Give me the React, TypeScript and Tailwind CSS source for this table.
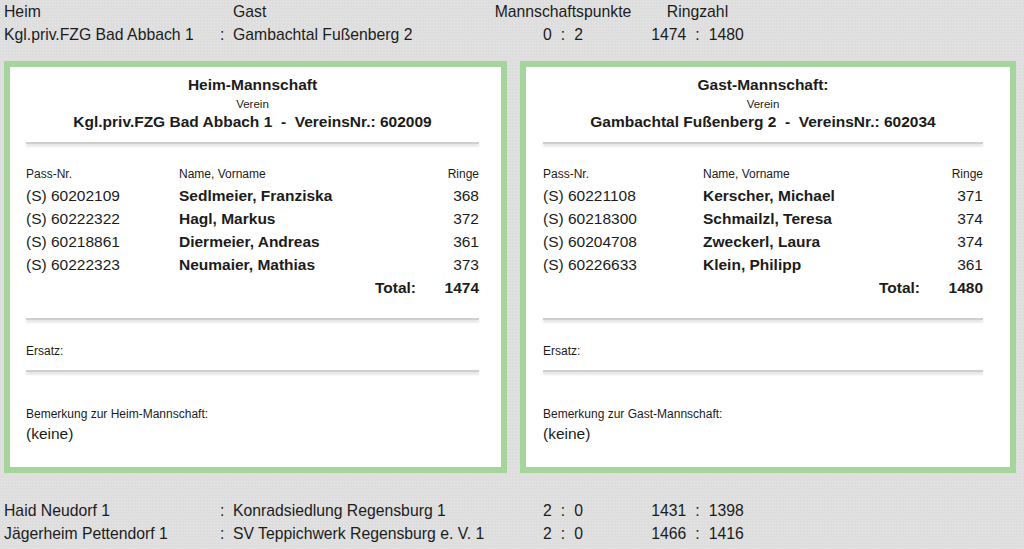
type Player = {
  pass: string;
  name: string;
  rings: number;
};

type TeamPanelProps = {
  title: string;
  club: string;
  players: Player[];
  total: number;
  remarkLabel: string;
  outerClass: string;
  padClass: string;
  passColClass: string;
};

const homePlayers: Player[] = [
  { pass: "(S) 60202109", name: "Sedlmeier, Franziska", rings: 368 },
  { pass: "(S) 60222322", name: "Hagl, Markus", rings: 372 },
  { pass: "(S) 60218861", name: "Diermeier, Andreas", rings: 361 },
  { pass: "(S) 60222323", name: "Neumaier, Mathias", rings: 373 }
];

const guestPlayers: Player[] = [
  { pass: "(S) 60221108", name: "Kerscher, Michael", rings: 371 },
  { pass: "(S) 60218300", name: "Schmailzl, Teresa", rings: 374 },
  { pass: "(S) 60204708", name: "Zweckerl, Laura", rings: 374 },
  { pass: "(S) 60226633", name: "Klein, Philipp", rings: 361 }
];

function Divider({ className = "" }: { className?: string }) {
  return <div className={`h-[2px] bg-[#cfcfcf] shadow-[0_2px_3px_rgba(0,0,0,0.18)] ${className}`} />;
}

function Pair({ left, right }: { left: string; right: string }) {
  return (
    <div className="flex justify-center gap-[9px]">
      <span>{left}</span>
      <span>:</span>
      <span>{right}</span>
    </div>
  );
}

function MatchRow({
  home,
  guest,
  points,
  rings
}: {
  home: string;
  guest: string;
  points: [string, string];
  rings: [string, string];
}) {
  return (
    <div className="flex h-[23px] items-center">
      <div className="w-[212px]">{home}</div>
      <div className="w-[17px] pl-[4px]">:</div>
      <div className="w-[257px]">{guest}</div>
      <div className="w-[146px]">
        <Pair left={points[0]} right={points[1]} />
      </div>
      <div className="w-[123px]">
        <Pair left={rings[0]} right={rings[1]} />
      </div>
    </div>
  );
}

function TeamPanel({ title, club, players, total, remarkLabel, outerClass, padClass, passColClass }: TeamPanelProps) {
  return (
    <div className={`border-[6px] border-[#a5d49c] bg-white ${outerClass}`}>
      <div className={`pt-[9px] pb-[24px] ${padClass}`}>
        <div className="text-center">
          <div className="text-[15.5px] font-bold leading-[18px]">{title}</div>
          <div className="mt-[1px] text-[11.5px] leading-[18px]">Verein</div>
          <div className="text-[15.5px] font-bold leading-[18px] whitespace-pre">{club}</div>
        </div>

        <Divider className="mt-[11px]" />

        <div className="mt-[22px] flex text-[12px] leading-[16px]">
          <div className={passColClass}>Pass-Nr.</div>
          <div className="flex-1">Name, Vorname</div>
          <div>Ringe</div>
        </div>

        <div className="mt-[2px] text-[15.5px]">
          {players.map((p) => (
            <div key={p.pass} className="flex h-[23px] items-center">
              <div className={passColClass}>{p.pass}</div>
              <div className="flex-1 font-bold">{p.name}</div>
              <div>{p.rings}</div>
            </div>
          ))}
          <div className="flex h-[23px] items-center justify-end font-bold">
            <div>Total:</div>
            <div className="w-[63px] text-right">{total}</div>
          </div>
        </div>

        <Divider className="mt-[19px]" />

        <div className="mt-[23px] text-[12px] leading-[16px]">Ersatz:</div>

        <Divider className="mt-[11px]" />

        <div className="mt-[34px] text-[12px] leading-[16px]">{remarkLabel}</div>
        <div className="mt-[3px] text-[15.5px] leading-[18px]">(keine)</div>
      </div>
    </div>
  );
}

export default function App() {
  return (
    <div className="min-h-[549px] w-[1024px] overflow-hidden bg-[#dedede] bg-[radial-gradient(#e6e6e6_0.6px,transparent_0.7px)] bg-[length:3px_3px] pl-[4px] font-['Liberation_Sans',Arial,sans-serif] text-[15.75px] text-[#1c1c1c]">
      <div className="flex h-[23px] items-center">
        <div className="w-[229px]">Heim</div>
        <div className="w-[257px]">Gast</div>
        <div className="w-[146px] text-center">Mannschaftspunkte</div>
        <div className="w-[123px] text-center">Ringzahl</div>
      </div>
      <MatchRow home="Kgl.priv.FZG Bad Abbach 1" guest="Gambachtal Fußenberg 2" points={["0", "2"]} rings={["1474", "1480"]} />

      <div className="mt-[15px] flex gap-[13px]">
        <TeamPanel
          title="Heim-Mannschaft"
          club="Kgl.priv.FZG Bad Abbach 1  -  VereinsNr.: 602009"
          players={homePlayers}
          total={1474}
          remarkLabel="Bemerkung zur Heim-Mannschaft:"
          outerClass="w-[503px]"
          padClass="pl-[16px] pr-[22px]"
          passColClass="w-[153px]"
        />
        <TeamPanel
          title="Gast-Mannschaft:"
          club="Gambachtal Fußenberg 2  -  VereinsNr.: 602034"
          players={guestPlayers}
          total={1480}
          remarkLabel="Bemerkung zur Gast-Mannschaft:"
          outerClass="w-[496px]"
          padClass="pl-[17px] pr-[27px]"
          passColClass="w-[160px]"
        />
      </div>

      <div className="mt-[26px]">
        <MatchRow home="Haid Neudorf 1" guest="Konradsiedlung Regensburg 1" points={["2", "0"]} rings={["1431", "1398"]} />
        <MatchRow home="Jägerheim Pettendorf 1" guest="SV Teppichwerk Regensburg e. V. 1" points={["2", "0"]} rings={["1466", "1416"]} />
      </div>
    </div>
  );
}
